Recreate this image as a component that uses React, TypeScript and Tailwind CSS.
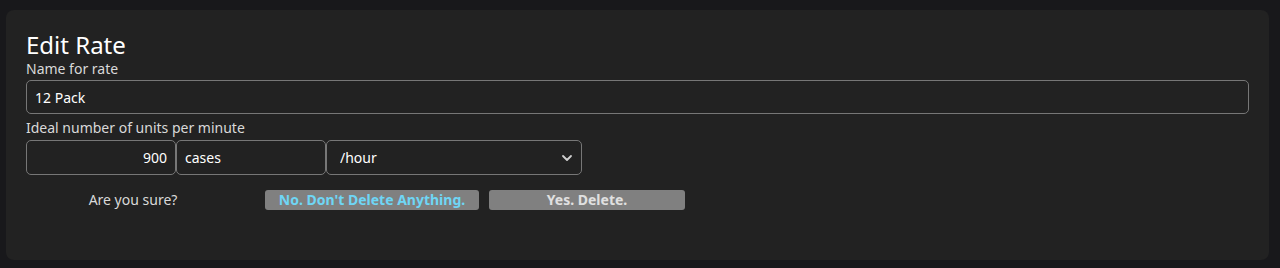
import React from "react";

const EditRate = () => {
  return (
    <div className="min-h-[268px] w-full bg-[#18181b] pt-[10px] pl-[6px] pr-[11px] pb-[8px] font-['Noto_Sans',sans-serif]">
      <div className="h-[250px] rounded-lg bg-[#222222] px-5 pt-[22px] text-[#e6e6e6]">
        <h1 className="text-[24px] leading-[26px] text-white">Edit Rate</h1>

        <label className="mt-[1px] block text-[14px] leading-[19px] text-[#d9d9d9]">
          Name for rate
        </label>
        <input
          type="text"
          defaultValue="12 Pack"
          className="mt-[2px] block h-[34px] w-full rounded-[5px] border border-[#777] bg-transparent px-2 text-[14px] text-white outline-none"
        />

        <label className="mt-[4px] block text-[14px] leading-[19px] text-[#d9d9d9]">
          Ideal number of units per minute
        </label>
        <div className="mt-[3px] flex">
          <input
            type="text"
            defaultValue="900"
            className="h-[35px] w-[150px] rounded-[5px] border border-[#777] bg-transparent px-2 text-right text-[14px] text-white outline-none"
          />
          <input
            type="text"
            defaultValue="cases"
            className="h-[35px] w-[150px] rounded-[5px] border border-[#777] bg-transparent px-2 text-[14px] text-white outline-none"
          />
          <div className="relative h-[35px] w-[256px]">
            <select
              defaultValue="hour"
              className="h-full w-full appearance-none rounded-[5px] border border-[#777] bg-[#222222] pl-[13px] text-[14px] text-white outline-none"
            >
              <option value="minute">/minute</option>
              <option value="hour">/hour</option>
            </select>
            <svg
              className="pointer-events-none absolute right-[9px] top-[12px] h-[12px] w-[12px]"
              viewBox="0 0 12 12"
              fill="none"
              stroke="#d0d0d0"
              strokeWidth="1.8"
              strokeLinecap="round"
              strokeLinejoin="round"
            >
              <path d="M2 4l4 4 4-4" />
            </svg>
          </div>
        </div>

        <div className="mt-[15px] flex items-center">
          <div className="w-[214px] text-center text-[14px] leading-[20px] text-[#d9d9d9]">
            Are you sure?
          </div>
          <button className="ml-[25px] h-[20px] w-[214px] rounded-[3px] bg-[#808080] text-[14px] font-bold leading-[20px] text-[#6fd6f5]">
            No. Don't Delete Anything.
          </button>
          <button className="ml-[10px] h-[20px] w-[196px] rounded-[3px] bg-[#808080] text-[14px] font-bold leading-[20px] text-[#e0e0e0]">
            Yes. Delete.
          </button>
        </div>
      </div>
    </div>
  );
};

export default function App() {
  return <EditRate />;
}
